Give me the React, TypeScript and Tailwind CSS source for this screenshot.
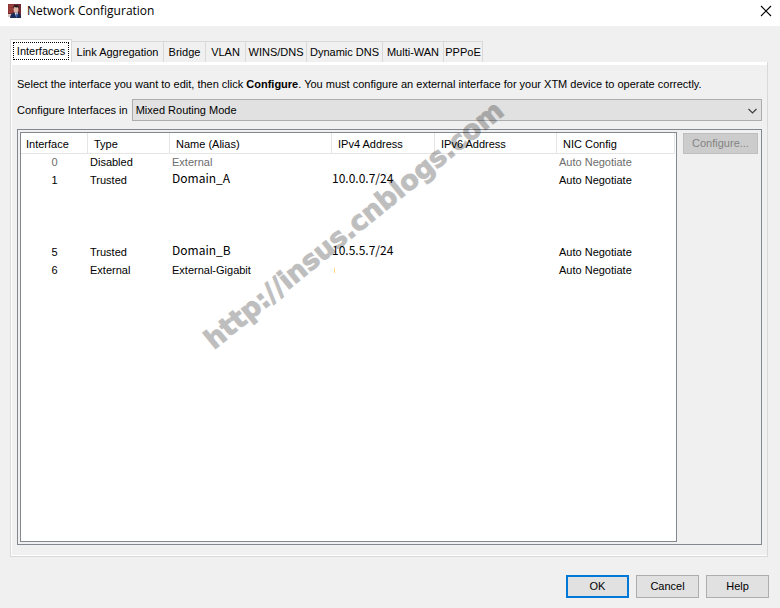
import { useState } from "react";
import clsx from "clsx";

type InterfaceRow = {
    id: number | null;
    type?: string;
    name?: string;
    ipv4?: string;
    nic?: string;
    disabled?: boolean;
    custom?: boolean;
    marker?: boolean;
};

const TABS = [
    { label: "Interfaces", width: "w-[62px]" },
    { label: "Link Aggregation", width: "w-[92px]" },
    { label: "Bridge", width: "w-[42px]" },
    { label: "VLAN", width: "w-[40px]" },
    { label: "WINS/DNS", width: "w-[61px]" },
    { label: "Dynamic DNS", width: "w-[76px]" },
    { label: "Multi-WAN", width: "w-[61px]" },
    { label: "PPPoE", width: "w-[39px]" },
];

const COLUMNS = [
    { label: "Interface", width: "w-[67px]", padding: "pl-[5px]" },
    { label: "Type", width: "w-[82px]", padding: "pl-1.5" },
    { label: "Name (Alias)", width: "w-[162px]", padding: "pl-1.5" },
    { label: "IPv4 Address", width: "w-[103px]", padding: "pl-1.5" },
    { label: "IPv6 Address", width: "w-[122px]", padding: "pl-1.5" },
    { label: "NIC Config", width: "w-auto", padding: "pl-1.5" },
];

const ROWS: InterfaceRow[] = [
    { id: 0, type: "Disabled", name: "External", nic: "Auto Negotiate", disabled: true },
    { id: 1, type: "Trusted", name: "Domain_A", ipv4: "10.0.0.7/24", nic: "Auto Negotiate", custom: true },
    { id: null },
    { id: null },
    { id: null },
    { id: 5, type: "Trusted", name: "Domain_B", ipv4: "10.5.5.7/24", nic: "Auto Negotiate", custom: true },
    { id: 6, type: "External", name: "External-Gigabit", nic: "Auto Negotiate", marker: true },
];

function AppIcon() {
    return (
        <svg width="16" height="16" viewBox="0 0 16 16" aria-hidden="true">
            <path d="M2 1h13v13H2z" fill="#6f2b30" />
            <path d="M2 1h6v9H2z" fill="#8f3433" />
            <path d="M3 3h4M3 6h4M3 9h3" stroke="#a24f4a" strokeWidth="1" />
            <path d="M2 11h4v3H2z" fill="#d9c9c5" />
            <path d="M4 15c0-3 2-5 4-5.500h4c2 .5 3 2.500 3 5.500z" fill="#1b2a55" />
            <path d="M8.500 9.500h3.500l-1.500 5z" fill="#e8edf5" />
            <path d="M10 10.500h1l.3 3-.8 1.500-.8-1.500z" fill="#3f6db0" />
            <ellipse cx="10" cy="6.500" rx="2.400" ry="3.200" fill="#dcb5a4" />
            <path d="M7.300 6c-.4-3 1-4 2.900-4s3 1.200 2.500 4l-.6-1.700c-1.400.3-2.700.1-3.900-.3z" fill="#241c20" />
        </svg>
    );
}

function TabStrip({ active, onSelect }: { active: string; onSelect: (tab: string) => void }) {
    return (
        <div role="tablist" className="flex items-end">
            {TABS.map(({ label, width }) => (
                <button
                    key={label}
                    role="tab"
                    aria-selected={label === active}
                    onClick={() => onSelect(label)}
                    className={clsx(
                        "border-[#d9d9d9] leading-4 whitespace-nowrap",
                        width,
                        label === active
                            ? "h-[23px] border-x border-t bg-white p-0.5"
                            : "h-[21px] border-t border-r bg-[#f0f0f0]"
                    )}
                >
                    {label === active ? (
                        <span className="block border border-dotted border-black">{label}</span>
                    ) : (
                        label
                    )}
                </button>
            ))}
        </div>
    );
}

function InterfaceTable() {
    return (
        <table className="w-full table-fixed border-separate border-spacing-0 text-left">
            <thead>
                <tr className="h-[21px]">
                    {COLUMNS.map((col) => (
                        <th
                            key={col.label}
                            className={clsx(
                                "border-r border-b border-[#e5e5e5] pt-0.5 pb-0 font-normal leading-4 whitespace-nowrap",
                                col.width,
                                col.padding
                            )}
                        >
                            {col.label}
                        </th>
                    ))}
                </tr>
            </thead>
            <tbody>
                {ROWS.map((row, index) => (
                    <tr key={index} className="h-[18px] align-top leading-4 whitespace-nowrap">
                        <td className={clsx("p-0 text-center", row.disabled && "text-[#6d6d6d]")}>{row.id}</td>
                        <td className="py-0 pl-0.5">{row.type}</td>
                        <td
                            className={clsx(
                                "py-0 pl-0.5",
                                row.disabled && "text-[#6d6d6d]",
                                row.custom && "font-['Noto_Sans_CJK_SC',sans-serif] text-xs leading-3"
                            )}
                        >
                            {row.name}
                        </td>
                        <td className="p-0 font-['Noto_Sans_CJK_SC',sans-serif] text-xs leading-3">
                            {row.ipv4}
                            {row.marker && <span className="mt-1.5 ml-0.5 block h-[5px] w-px bg-[#ffd97a]" />}
                        </td>
                        <td className="p-0" />
                        <td className={clsx("py-0 pl-0.5", row.disabled && "text-[#6d6d6d]")}>{row.nic}</td>
                    </tr>
                ))}
            </tbody>
        </table>
    );
}

export default function App() {
    const [activeTab, setActiveTab] = useState("Interfaces");

    return (
        <div className="relative flex min-h-screen flex-col overflow-hidden bg-[#f0f0f0] font-['Liberation_Sans',Arial,sans-serif] text-[11px] text-black">
            {/* Title bar */}
            <header className="flex h-[26px] items-center bg-white pb-1 pl-1.5">
                <AppIcon />
                <h1 className="ml-[5px] flex-1 font-['Open_Sans',sans-serif] text-xs">Network Configuration</h1>
                <button aria-label="Close" className="mr-2">
                    <svg width="12" height="12" viewBox="0 0 12 12" fill="none" stroke="#000" strokeWidth="1.100">
                        <path d="M1 1l10 10M11 1L1 11" />
                    </svg>
                </button>
            </header>

            <main className="flex flex-1 flex-col px-2.5 pt-[13px] pb-2.5">
                <TabStrip active={activeTab} onSelect={setActiveTab} />

                <section role="tabpanel" className="mr-0.5 flex flex-1 flex-col border border-t-0 border-[#d9d9d9]">
                    <div className="flex flex-1 flex-col border-t-3 border-b border-l border-white px-[5px] pt-[11px] pb-2.5">
                        <p className="leading-4">
                            Select the interface you want to edit, then click <b>Configure</b>. You must configure an
                            external interface for your XTM device to operate correctly.
                        </p>

                        <div className="mt-[7px] flex items-center gap-1">
                            <label htmlFor="mode">Configure Interfaces in</label>
                            <div className="relative flex-1">
                                <select
                                    id="mode"
                                    className="block h-[22px] w-full appearance-none border border-[#adadad] bg-[#e1e1e1] pl-[3px]"
                                >
                                    <option>Mixed Routing Mode</option>
                                    <option>Drop-In Mode</option>
                                    <option>Bridge Mode</option>
                                </select>
                                <svg
                                    className="pointer-events-none absolute top-[9px] right-[5px]"
                                    width="9"
                                    height="6"
                                    viewBox="0 0 9 6"
                                    fill="none"
                                    stroke="#404040"
                                    strokeWidth="1.200"
                                >
                                    <path d="M.5 1l4 4 4-4" />
                                </svg>
                            </div>
                        </div>

                        <div className="mt-2 flex flex-1 gap-1.5 border border-[#828790] p-0.5 pr-[3px]">
                            <div className="flex-1 border border-[#828790] bg-white pr-px">
                                <InterfaceTable />
                            </div>
                            <button
                                disabled
                                className="mt-px h-[21px] w-[75px] border border-[#bfbfbf] bg-[#cccccc] text-[#838383]"
                            >
                                Configure...
                            </button>
                        </div>
                    </div>
                </section>

                <footer className="mt-[18px] mr-px flex justify-end gap-[7px]">
                    <button className="h-[23px] w-[63px] border-2 border-[#0078d7] bg-[#e1e1e1]">OK</button>
                    <button className="h-[23px] w-[63px] border border-[#adadad] bg-[#e1e1e1]">Cancel</button>
                    <button className="h-[23px] w-[63px] border border-[#adadad] bg-[#e1e1e1]">Help</button>
                </footer>
            </main>

            {/* Watermark */}
            <div className="pointer-events-none absolute top-[205px] left-[154px] w-[400px] -rotate-39 text-center font-['DejaVu_Sans',sans-serif] text-[27px] leading-10 font-bold whitespace-nowrap text-black opacity-25 [-webkit-text-stroke:1px_black]">
                http://insus.cnblogs.com
            </div>
        </div>
    );
}
